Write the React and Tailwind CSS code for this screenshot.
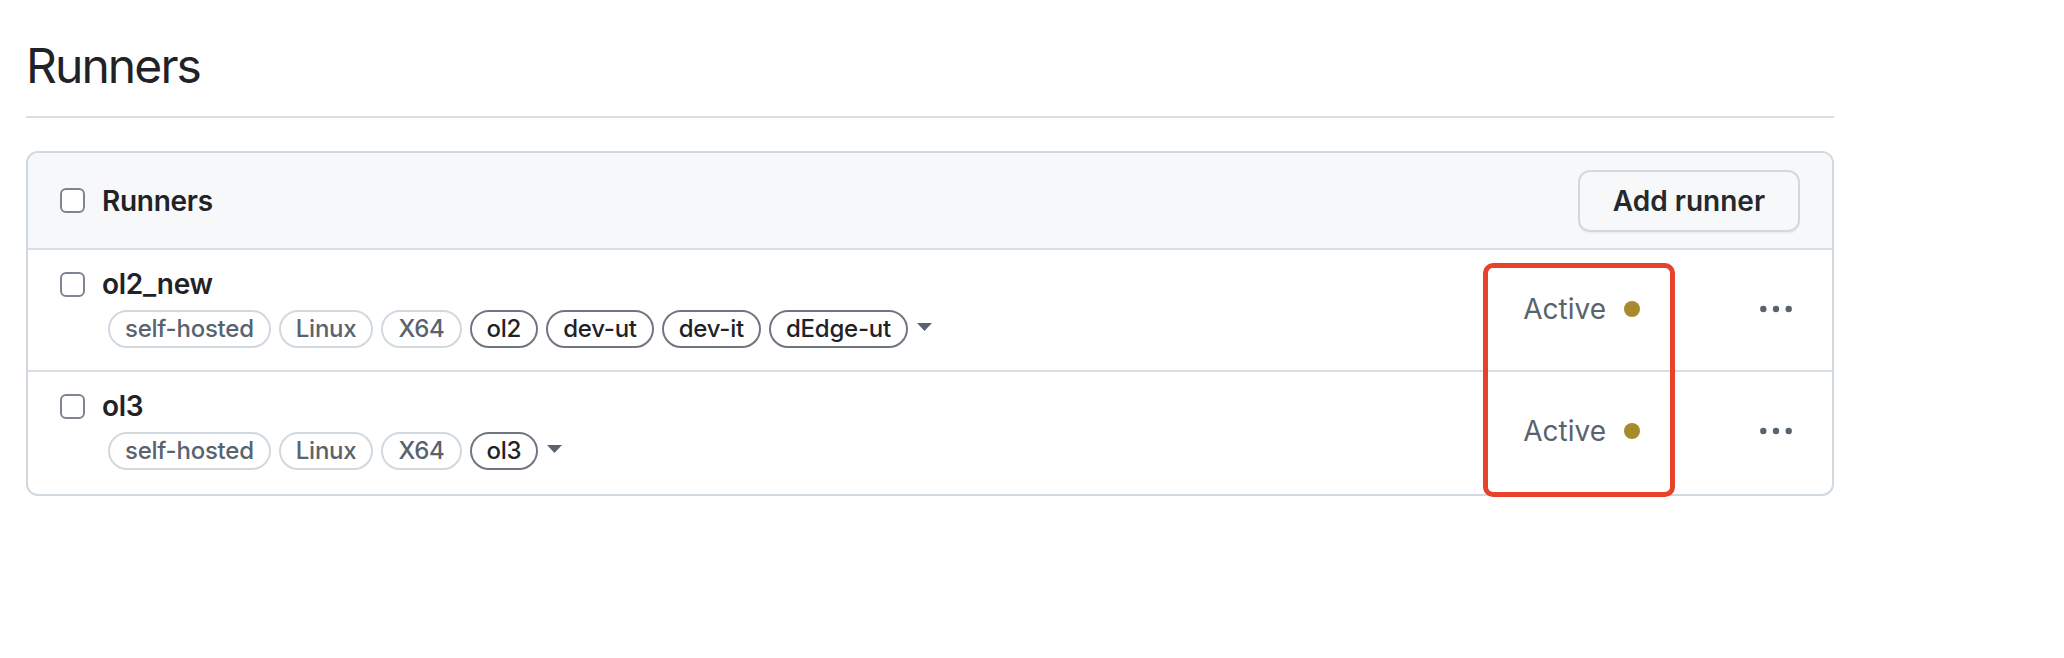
import React from 'react';

const font = { fontFamily: 'Inter, "Noto Sans", sans-serif' };

const runners = [
  {
    name: 'ol2_new',
    labels: [
      { text: 'self-hosted', muted: true },
      { text: 'Linux', muted: true },
      { text: 'X64', muted: true },
      { text: 'ol2' },
      { text: 'dev-ut' },
      { text: 'dev-it' },
      { text: 'dEdge-ut' },
    ],
  },
  {
    name: 'ol3',
    labels: [
      { text: 'self-hosted', muted: true },
      { text: 'Linux', muted: true },
      { text: 'X64', muted: true },
      { text: 'ol3' },
    ],
  },
];

const Checkbox = () => (
  <span className="block w-[25px] h-[25px] shrink-0 rounded-[6px] border-2 border-[#7d8590] bg-white" />
);

const Label = ({ text, muted }) => (
  <span
    className={
      muted
        ? 'h-[38px] px-[15px] rounded-full border-2 border-[#d1d9e0] text-[#59636e] text-[24px] font-medium leading-[34px] tracking-[-0.01em] whitespace-nowrap'
        : 'h-[38px] px-[15px] rounded-full border-2 border-[#6e7781] text-[#1f2328] text-[24px] font-medium leading-[34px] tracking-[-0.01em] whitespace-nowrap'
    }
  >
    {text}
  </span>
);

const Kebab = () => (
  <svg width="32" height="8" viewBox="0 0 32 8" fill="#59636e">
    <circle cx="3.3" cy="4" r="3.2" />
    <circle cx="16" cy="4" r="3.2" />
    <circle cx="28.7" cy="4" r="3.2" />
  </svg>
);

const RunnerRow = ({ runner, last }) => (
  <div
    className={
      last
        ? 'flex items-center pl-[32px] pr-[32px] pt-[17px] pb-[24px]'
        : 'flex items-center pl-[32px] pr-[32px] pt-[17px] pb-[22px] border-b-2 border-[#d8dee4]'
    }
  >
    <div className="flex-1">
      <div className="h-[34px] flex items-center gap-[17px]">
        <Checkbox />
        <span className="text-[28px] font-semibold text-[#1f2328] tracking-[-0.01em]">{runner.name}</span>
      </div>
      <div className="mt-[9px] ml-[48px] flex items-center gap-[8px]">
        {runner.labels.map((l) => (
          <Label key={l.text} text={l.text} muted={l.muted} />
        ))}
        <svg width="15" height="8" viewBox="0 0 15 8" className="ml-[1px] -mt-[4px]">
          <path d="M0 0h15L7.5 8z" fill="#59636e" />
        </svg>
      </div>
    </div>
    <div className="flex items-center gap-[18px] mr-[112px] mt-[3px]">
      <span className="text-[28px] text-[#59636e]">Active</span>
      <span className="block w-[16px] h-[16px] rounded-full bg-[#a68a2b]" />
    </div>
    <div className="w-[48px] h-[48px] flex items-center justify-center mt-[2px]">
      <Kebab />
    </div>
  </div>
);

export default function App() {
  return (
    <div className="min-h-screen bg-white px-[26px]" style={font}>
      <div className="w-[1808px]">
        <div className="pt-[36px] pb-[20px] border-b-2 border-[#d8dee4]">
          <h1 className="text-[48px] leading-[60px] font-normal text-[#1f2328] tracking-[-0.04em]">Runners</h1>
        </div>

        <div className="relative mt-[33px] border-2 border-[#d1d9e0] rounded-[12px]">
          <div className="h-[97px] flex items-center justify-between pl-[32px] pr-[32px] bg-[#f6f8fa] border-b-2 border-[#d8dee4] rounded-t-[10px]">
            <div className="flex items-center gap-[17px]">
              <Checkbox />
              <span className="text-[28px] font-semibold text-[#1f2328] tracking-[-0.01em]">Runners</span>
            </div>
            <button className="h-[62px] px-[33px] rounded-[12px] border-2 border-[#d1d9e0] bg-[#f6f8fa] text-[28px] font-semibold text-[#25292e] shadow-[0_2px_0_rgba(31,35,40,0.04)]">
              Add runner
            </button>
          </div>

          {runners.map((r, i) => (
            <RunnerRow key={r.name} runner={r} last={i === runners.length - 1} />
          ))}

          <div className="absolute left-[1455px] top-[110px] w-[192px] h-[234px] border-[5px] border-[#e8432a] rounded-[10px] pointer-events-none" />
        </div>
      </div>
    </div>
  );
}
